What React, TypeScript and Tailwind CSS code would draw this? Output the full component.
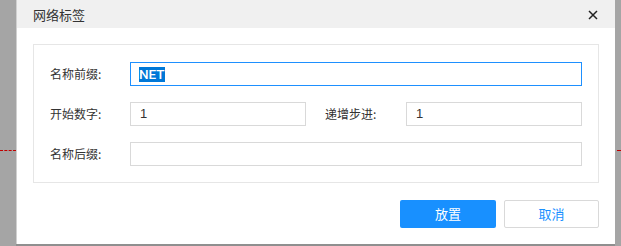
import React from "react";

const font = { fontFamily: '"Noto Sans CJK SC", "Noto Sans", sans-serif' };
const latin = { fontFamily: '"Liberation Sans", Arial, sans-serif' };

export default function App() {
  return (
    <div
      className="relative w-[621px] h-[246px] overflow-hidden bg-[#a5a5a5]"
      style={font}
    >
      {/* background red dotted guide lines */}
      <div className="absolute left-0 top-[150px] w-[16px] border-t border-dashed border-[#c00000]" />
      <div className="absolute left-[617px] top-[150px] w-[4px] border-t border-dashed border-[#c00000]" />

      <div className="relative ml-[16px] w-[599px] h-[244px] bg-white border-l border-[#d0d0d0] flex flex-col">
        {/* header */}
        <div className="h-[28px] bg-[#f0f0f0] flex items-center justify-between pl-[16px] pr-[17px]">
          <span className="text-[13px] text-[#333] leading-none">网络标签</span>
          <svg width="10" height="10" viewBox="0 0 10 10" className="mt-[1px]">
            <path d="M1 1L9 9M9 1L1 9" stroke="#222" strokeWidth="1.5" />
          </svg>
        </div>

        {/* body */}
        <div className="flex-1 px-[16px] pt-[16px] flex flex-col">
          <div className="border border-[#e6e6e6] pt-[17px] pb-[16px] px-[16px] flex flex-col gap-[16px]">
            <div className="flex items-center h-[24px]">
              <div className="w-[80px] text-[12px] text-[#333]">名称前缀:</div>
              <div className="flex-1 h-[24px] border border-[#1e90ff] flex items-center pl-[8px]">
                <span
                  className="bg-[#0078d7] text-white text-[13.5px] leading-[15px] font-medium"
                  style={{ fontFamily: 'Roboto, "Liberation Sans", sans-serif' }}
                >
                  NET
                </span>
              </div>
            </div>
            <div className="flex items-center h-[24px]">
              <div className="w-[80px] text-[12px] text-[#333]">开始数字:</div>
              <div className="w-[176px] h-[24px] border border-[#d9d9d9] flex items-center px-[9px] text-[13px] text-[#333]" style={latin}>
                1
              </div>
              <div className="w-[100px] pl-[19px] text-[12px] text-[#333]">递增步进:</div>
              <div className="flex-1 h-[24px] border border-[#d9d9d9] flex items-center px-[9px] text-[13px] text-[#333]" style={latin}>
                1
              </div>
            </div>
            <div className="flex items-center h-[24px]">
              <div className="w-[80px] text-[12px] text-[#333]">名称后缀:</div>
              <div className="flex-1 h-[24px] border border-[#d9d9d9]" />
            </div>
          </div>

          <div className="flex justify-end gap-[8px] mt-[17px]">
            <button className="w-[96px] h-[28px] bg-[#1890ff] text-white text-[13px] rounded-[2px] flex items-center justify-center">
              放置
            </button>
            <button className="w-[95px] h-[28px] bg-white border border-[#d9d9d9] text-[#1890ff] text-[13px] rounded-[2px] flex items-center justify-center">
              取消
            </button>
          </div>
        </div>
      </div>
      <div className="absolute left-[16px] top-[244px] w-[599px] h-[2px] bg-[#8f8f8f]" />
    </div>
  );
}
